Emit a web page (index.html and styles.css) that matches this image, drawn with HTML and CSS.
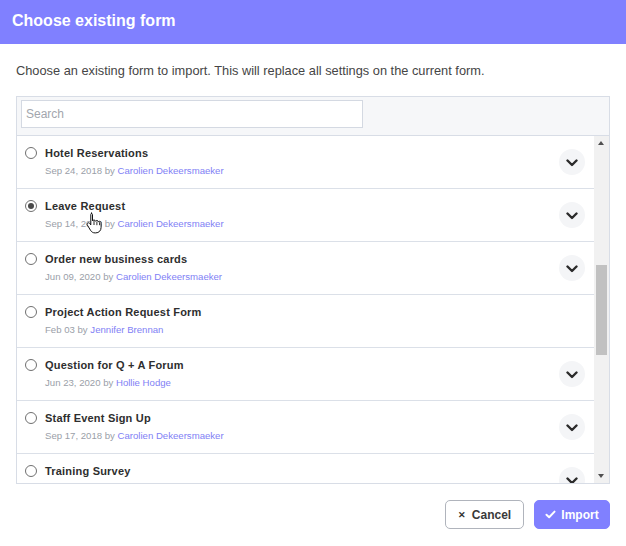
FILE: index.html
```html
<!DOCTYPE html>
<html>
<head>
<meta charset="utf-8">
<link rel="stylesheet" href="styles.css">
</head>
<body>
<div class="dialog">
  <div class="header"><h1>Choose existing form</h1></div>
  <p class="desc">Choose an existing form to import. This will replace all settings on the current form.</p>
  <div class="panel">
    <div class="search-bar"><input class="search" type="text" placeholder="Search"></div>
    <div class="list-wrap">
      <div class="rows">
        <div class="row">
          <span class="radio"></span>
          <div class="info"><div class="name">Hotel Reservations</div><div class="meta">Sep 24, 2018 by <span class="author">Carolien Dekeersmaeker</span></div></div>
          <span class="chev"><svg viewBox="0 0 12 8" width="12" height="8"><path d="M1.5 1.5 L6 6 L10.5 1.5" fill="none" stroke="#2b2b2b" stroke-width="2.4" stroke-linecap="round" stroke-linejoin="round"/></svg></span>
        </div>
        <div class="row">
          <span class="radio checked"></span>
          <div class="info"><div class="name">Leave Request</div><div class="meta">Sep 14, 2018 by <span class="author">Carolien Dekeersmaeker</span></div></div>
          <span class="chev"><svg viewBox="0 0 12 8" width="12" height="8"><path d="M1.5 1.5 L6 6 L10.5 1.5" fill="none" stroke="#2b2b2b" stroke-width="2.4" stroke-linecap="round" stroke-linejoin="round"/></svg></span>
          <svg class="cursor" viewBox="0 0 16 22" width="16" height="22"><path d="M5 1.2c.9 0 1.5.6 1.5 1.5v6.2c.3-.6.9-.9 1.5-.9.8 0 1.4.5 1.5 1.2.3-.4.8-.7 1.4-.7.8 0 1.4.6 1.5 1.3.3-.3.7-.5 1.2-.5.9 0 1.5.7 1.5 1.6v4.4c0 3.3-2.2 5.6-5.4 5.6H9c-2.1 0-3.3-.9-4.5-2.6L1.4 13.1c-.5-.8-.3-1.7.4-2.1.7-.4 1.5-.2 2 .5l1 1.4V2.7c0-.9.3-1.5 1.2-1.5z" fill="#fff" stroke="#111" stroke-width="1"/><path d="M8 9v4M10.9 9.6v3.6M13.6 10.2v3" stroke="#111" stroke-width="0.9"/></svg>
        </div>
        <div class="row">
          <span class="radio"></span>
          <div class="info"><div class="name">Order new business cards</div><div class="meta">Jun 09, 2020 by <span class="author">Carolien Dekeersmaeker</span></div></div>
          <span class="chev"><svg viewBox="0 0 12 8" width="12" height="8"><path d="M1.5 1.5 L6 6 L10.5 1.5" fill="none" stroke="#2b2b2b" stroke-width="2.4" stroke-linecap="round" stroke-linejoin="round"/></svg></span>
        </div>
        <div class="row">
          <span class="radio"></span>
          <div class="info"><div class="name">Project Action Request Form</div><div class="meta">Feb 03 by <span class="author">Jennifer Brennan</span></div></div>
        </div>
        <div class="row">
          <span class="radio"></span>
          <div class="info"><div class="name">Question for Q + A Forum</div><div class="meta">Jun 23, 2020 by <span class="author">Hollie Hodge</span></div></div>
          <span class="chev"><svg viewBox="0 0 12 8" width="12" height="8"><path d="M1.5 1.5 L6 6 L10.5 1.5" fill="none" stroke="#2b2b2b" stroke-width="2.4" stroke-linecap="round" stroke-linejoin="round"/></svg></span>
        </div>
        <div class="row">
          <span class="radio"></span>
          <div class="info"><div class="name">Staff Event Sign Up</div><div class="meta">Sep 17, 2018 by <span class="author">Carolien Dekeersmaeker</span></div></div>
          <span class="chev"><svg viewBox="0 0 12 8" width="12" height="8"><path d="M1.5 1.5 L6 6 L10.5 1.5" fill="none" stroke="#2b2b2b" stroke-width="2.4" stroke-linecap="round" stroke-linejoin="round"/></svg></span>
        </div>
        <div class="row">
          <span class="radio"></span>
          <div class="info"><div class="name">Training Survey</div></div>
          <span class="chev"><svg viewBox="0 0 12 8" width="12" height="8"><path d="M1.5 1.5 L6 6 L10.5 1.5" fill="none" stroke="#2b2b2b" stroke-width="2.4" stroke-linecap="round" stroke-linejoin="round"/></svg></span>
        </div>
      </div>
      <div class="scrollbar">
        <div class="arrow up"></div>
        <div class="track"><div class="thumb"></div></div>
        <div class="arrow down"></div>
      </div>
    </div>
  </div>
  <div class="footer">
    <button class="btn cancel"><span class="ico">&#x2715;</span>Cancel</button>
    <button class="btn import"><svg class="check" viewBox="0 0 12 10" width="11" height="9"><path d="M1.5 5.2 L4.5 8 L10.5 1.8" fill="none" stroke="#fff" stroke-width="2.2" stroke-linecap="round" stroke-linejoin="round"/></svg>Import</button>
  </div>
</div>
</body>
</html>
```

FILE: styles.css
```css
* { box-sizing: border-box; }
html, body { margin: 0; padding: 0; background: #fff; }
body { font-family: "Liberation Sans", Arial, sans-serif; width: 626px; height: 546px; overflow: hidden; }
.dialog { display: flex; flex-direction: column; height: 546px; }
.header { height: 44px; background: #8080ff; display: flex; align-items: center; padding-left: 12px; }
.header h1 { margin: 0; font-size: 16px; font-weight: bold; color: #fff; position: relative; top: -1px; }
.desc { margin: 19px 16px 0; font-size: 12.8px; line-height: 16px; color: #454545; }
.panel { margin: 17px 16px 0; border: 1px solid #d8dde6; height: 388px; display: flex; flex-direction: column; }
.search-bar { background: #f6f7f9; height: 39px; border-bottom: 1px solid #d8dde6; padding: 3px 4px; }
.search { width: 342px; height: 28px; border: 1px solid #d4d9e2; background: #fff; font-family: "Liberation Sans", Arial, sans-serif; font-size: 12px; padding: 0 4px; outline: none; color: #333; }
.search::placeholder { color: #a2a6ad; }
.list-wrap { flex: 1; display: flex; min-height: 0; }
.rows { flex: 1; overflow: hidden; }
.row { position: relative; height: 53px; border-bottom: 1px solid #dbe0e8; display: flex; align-items: flex-start; padding: 10px 0 0 8px; }
.radio { width: 12px; height: 12px; border-radius: 50%; border: 1px solid #707070; background: #fff; margin-top: 1px; flex: none; display: flex; align-items: center; justify-content: center; }
.radio.checked::after { content: ""; width: 6px; height: 6px; border-radius: 50%; background: #4a4a4a; }
.info { margin-left: 8px; flex: 1; }
.name { font-size: 11px; line-height: 14px; font-weight: bold; color: #2e2e2e; letter-spacing: 0.2px; }
.meta { margin-top: 5px; font-size: 9.6px; line-height: 12px; color: #9aa0a8; }
.author { color: #8181f5; }
.chev { width: 26px; height: 26px; border-radius: 50%; background: #f4f5f7; display: flex; align-items: center; justify-content: center; margin: 3px 9px 0 0; flex: none; }
.chev svg { margin-top: 1px; }
.cursor { position: absolute; left: 69px; top: 23px; }
.scrollbar { width: 15px; flex: none; background: #f1f1f1; display: flex; flex-direction: column; }
.arrow { height: 15px; position: relative; }
.arrow::after { content: ""; position: absolute; left: 4px; border-left: 3.5px solid transparent; border-right: 3.5px solid transparent; }
.arrow.up::after { top: 5px; border-bottom: 4px solid #505050; }
.arrow.down::after { top: 6px; border-top: 4px solid #505050; }
.track { flex: 1; padding: 114px 2px 0; }
.thumb { height: 90px; background: #c1c1c1; }
.footer { display: flex; justify-content: flex-end; gap: 10px; padding: 16px 16px 0 0; }
.btn { height: 29px; border-radius: 5px; font-family: "Liberation Sans", Arial, sans-serif; font-size: 12px; font-weight: bold; display: flex; align-items: center; justify-content: center; cursor: pointer; }
.cancel { width: 79px; background: #fff; border: 1px solid #b0b4bc; color: #3a3a3a; }
.cancel .ico { font-size: 9px; margin-right: 6px; color: #333; }
.import { width: 76px; background: #8080ff; border: 1px solid #8080ff; color: #fff; }
.check { margin-right: 5px; }
```
